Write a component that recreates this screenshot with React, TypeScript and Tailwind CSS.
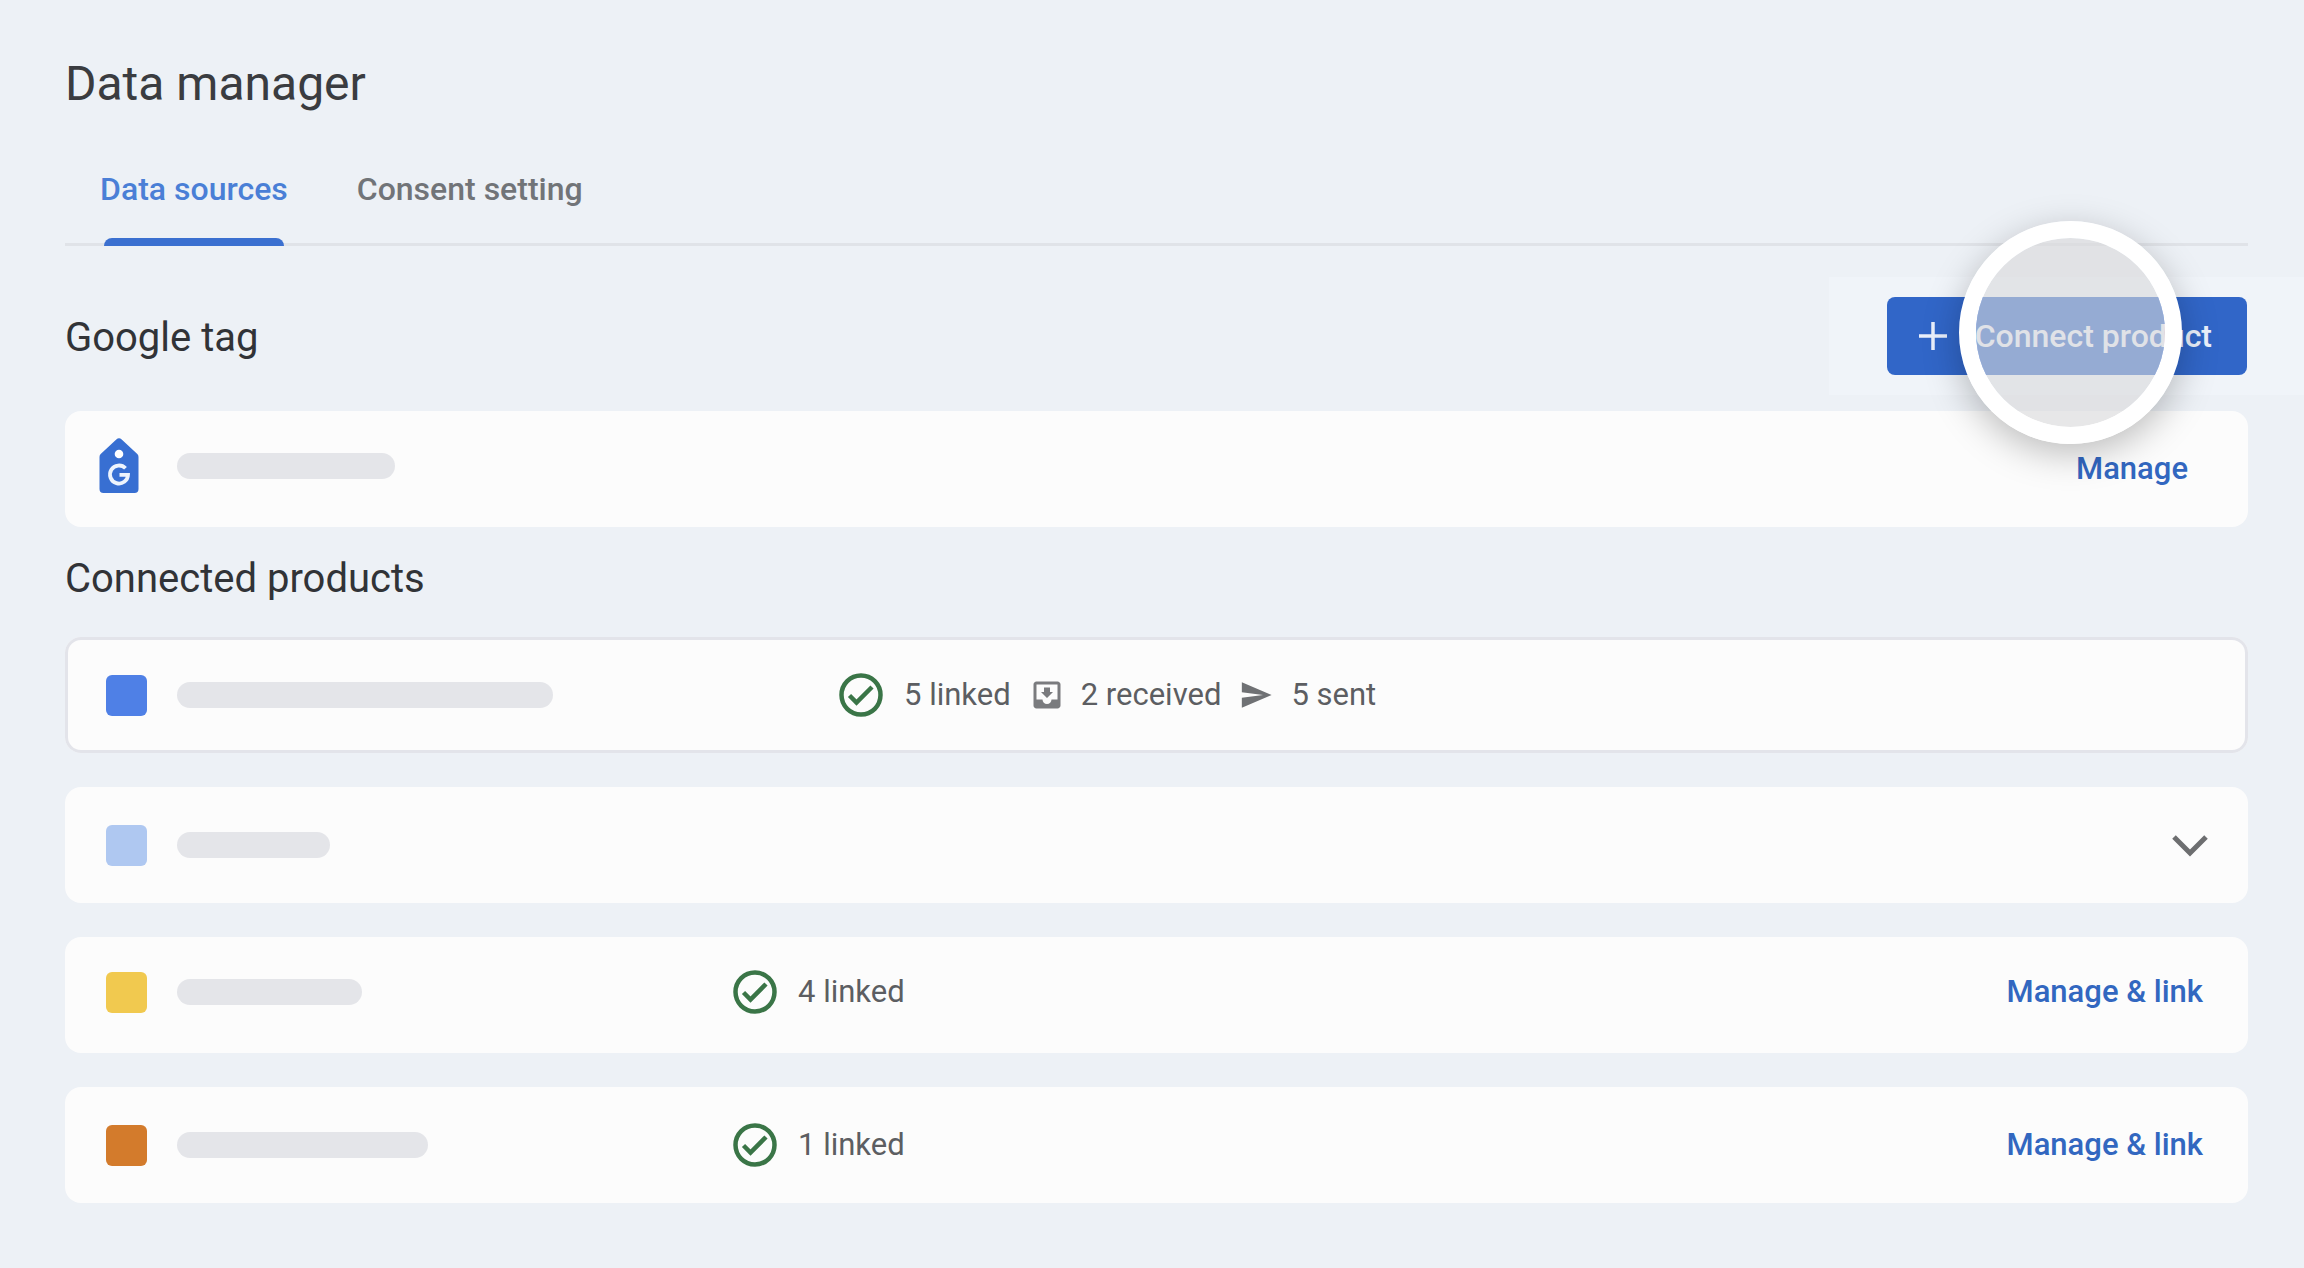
import type { ReactNode } from "react";
import { MdMoveToInbox, MdSend } from "react-icons/md";

function CheckCircle() {
  return (
    <svg viewBox="0 0 44 44" className="size-11 shrink-0" fill="none" stroke="#3a7547" aria-hidden="true">
      <circle cx="22" cy="22" r="19.5" strokeWidth="4.5" />
      <path d="M10.5 22.5 17.5 29.5 33 14" strokeWidth="4.5" />
    </svg>
  );
}

function TagIcon() {
  return (
    <svg viewBox="0 0 40 56" className="h-14 w-10 shrink-0" fill="none" aria-hidden="true">
      <path d="M17.3 1.5a4 4 0 0 1 5.4 0l15.6 14.6a4 4 0 0 1 1.200 2.900v32a4 4 0 0 1-4 4h-31a4 4 0 0 1-4-4v-32a4 4 0 0 1 1.200-2.900z" fill="#386fd2" />
      <circle cx="20" cy="16" r="4.300" fill="#fff" />
      <path d="M26.500 30.300A9 9 0 1 0 29 36.800H20.500" stroke="#eef4fd" strokeWidth="3.800" />
    </svg>
  );
}

function Placeholder({ width }: { width: string }) {
  return <span className={`block h-[26px] rounded-full bg-[#e4e5e9] ${width}`} />;
}

function Card({ className = "", children }: { className?: string; children: ReactNode }) {
  return <div className={`flex h-[116px] items-center rounded-2xl bg-[#fcfcfc] ${className}`}>{children}</div>;
}

function ProductName({ color, bar, column = "" }: { color: string; bar: string; column?: string }) {
  return (
    <div className={`flex items-center gap-[30px] pl-[41px] ${column}`}>
      <span className={`size-[41px] shrink-0 rounded-md ${color}`} />
      <Placeholder width={bar} />
    </div>
  );
}

function Linked({ count }: { count: number }) {
  return (
    <div className="flex items-center gap-[21px]">
      <CheckCircle />
      <span>{count} linked</span>
    </div>
  );
}

const linkClass = "ml-auto font-medium text-[#3267c0]";

export default function App() {
  return (
    <main className="min-h-screen bg-[#edf1f6] pt-14 pr-14 pb-16 pl-[65px] font-['Roboto',sans-serif] text-[31px] leading-10 text-[#5c5e62]">
      <h1 className="text-[48px] leading-14 text-[#3a3c40]">Data manager</h1>

      <nav className="mt-[54px] flex gap-[69px] border-b-[3px] border-[#e0e3e8] pl-[35px] text-[32px] font-medium" role="tablist">
        <button type="button" role="tab" aria-selected="true" className="-mb-[3px] flex flex-col items-center text-[#4a7fd6]">
          <span className="pt-[3px] pb-[29px]">Data sources</span>
          <span className="h-2 w-[180px] rounded-t-lg bg-[#3b70d0]" />
        </button>
        <button type="button" role="tab" aria-selected="false" className="pt-[3px] pb-[34px] text-[#717478]">
          Consent setting
        </button>
      </nav>

      <section className="pt-[31px]">
        <div className="-mr-14 flex items-center justify-between">
          <h2 className="pt-[3px] text-[40px] leading-12 text-[#313337]">Google tag</h2>
          <div className="relative bg-[#f0f4f9] py-5 pr-[57px] pl-[58px]">
            <button type="button" className="flex h-[78px] items-center gap-7 rounded-lg bg-[#3166c8] pr-[35px] pl-8 text-[32px] font-medium text-[#eaf0fb]">
              <svg viewBox="0 0 28 28" className="size-7" stroke="currentColor" strokeWidth="3.500" aria-hidden="true">
                <path d="M14 0V28M0 14H28" />
              </svg>
              Connect product
            </button>
            <span className="pointer-events-none absolute -top-14 right-[122px] size-[223px] rounded-full border-[17px] border-white bg-[#d9d9da]/60 bg-clip-padding shadow-[0_10px_36px_rgba(0,0,0,0.25)]" />
          </div>
        </div>
        <Card className="mt-4 pr-[60px] pl-[34px]">
          <div className="flex items-center gap-[38px] pb-1.5">
            <TagIcon />
            <Placeholder width="w-[218px]" />
          </div>
          <a href="#manage" className={linkClass}>Manage</a>
        </Card>
      </section>

      <section className="pt-7">
        <h2 className="text-[40px] leading-12 text-[#313337]">Connected products</h2>
        <div className="mt-[34px] flex flex-col gap-[34px]">
          <Card className="ring-[3px] ring-[#e3e4ea] ring-inset">
            <ProductName color="bg-[#4f80e6]" bar="w-[376px]" column="w-[774px]" />
            <div className="flex items-center">
              <Linked count={5} />
              <MdMoveToInbox className="ml-[18px] size-9 text-[#7a7b7e]" aria-hidden="true" />
              <span className="ml-4">2 received</span>
              <MdSend className="ml-[18px] size-[34px] text-[#6f7174]" aria-hidden="true" />
              <span className="ml-[18px]">5 sent</span>
            </div>
          </Card>
          <Card className="pr-[40px]">
            <ProductName color="bg-[#afc8f1]" bar="w-[153px]" />
            <button type="button" aria-label="Expand" className="ml-auto">
              <svg viewBox="0 0 36 24" className="h-6 w-9" fill="none" stroke="#6d6e70" strokeWidth="5" aria-hidden="true">
                <path d="M2 4 18 20 34 4" />
              </svg>
            </button>
          </Card>
          <Card className="pr-[45px] pb-1.5">
            <ProductName color="bg-[#f1c94f]" bar="w-[185px]" column="w-[668px]" />
            <Linked count={4} />
            <a href="#manage-4" className={linkClass}>Manage &amp; link</a>
          </Card>
          <Card className="pr-[45px]">
            <ProductName color="bg-[#d37b2c]" bar="w-[251px]" column="w-[668px]" />
            <Linked count={1} />
            <a href="#manage-1" className={linkClass}>Manage &amp; link</a>
          </Card>
        </div>
      </section>
    </main>
  );
}
